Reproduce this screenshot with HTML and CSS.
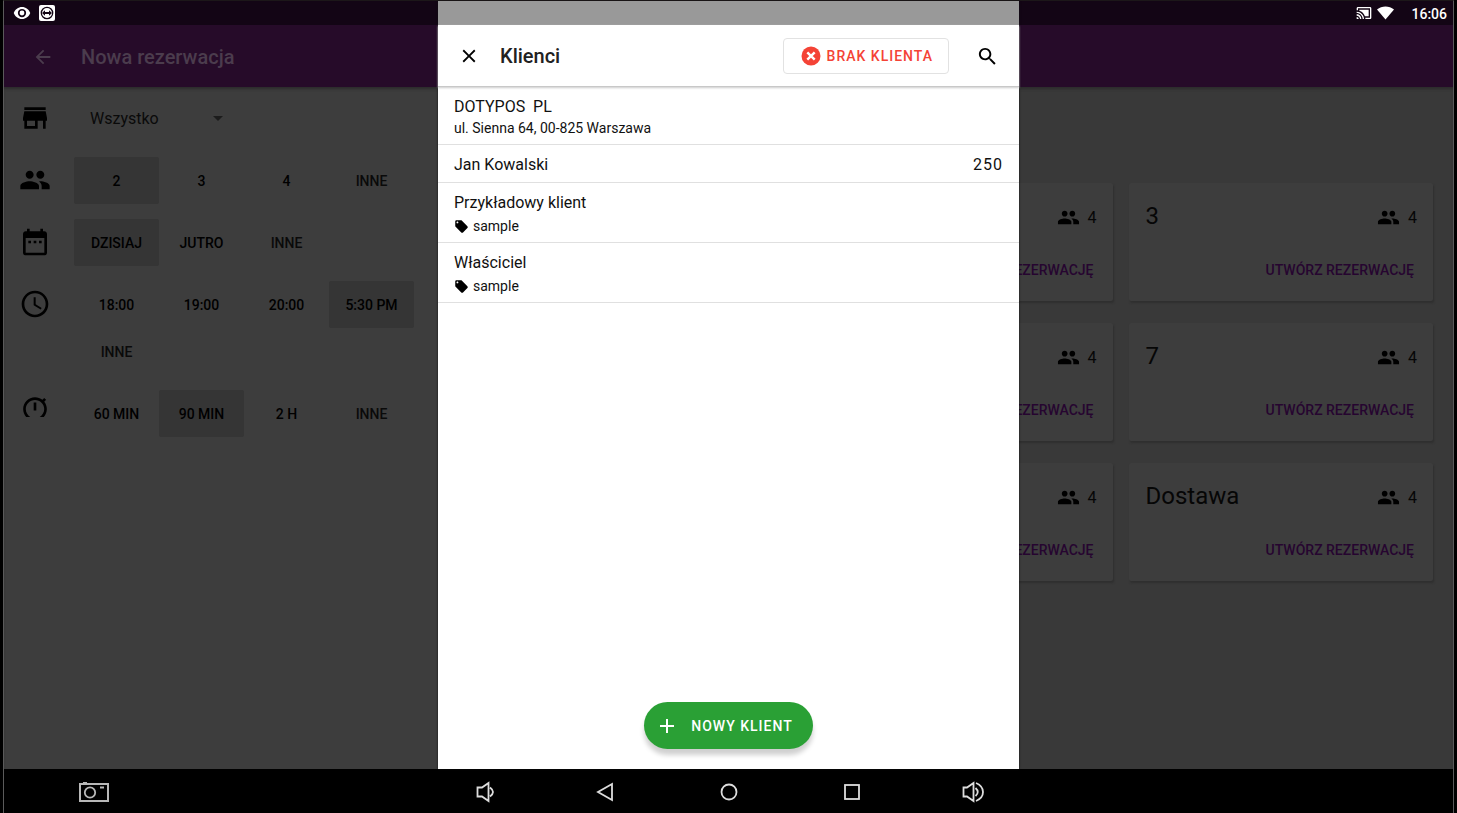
FILE: index.html
```
<!DOCTYPE html>
<html lang="pl">
<head>
  <meta charset="UTF-8">
  <meta name="viewport" content="width=device-width, initial-scale=1.0">
  <title>Nowa rezerwacja</title>
  <link rel="stylesheet" href="styles.css">
</head>
<body>
  <svg class="sprite" aria-hidden="true">
    <symbol id="people" viewBox="0 0 24 24">
      <path d="M16 11c1.66 0 2.99-1.34 2.99-3S17.66 5 16 5s-3 1.34-3 3 1.34 3 3 3zm-8 0c1.66 0 2.99-1.34 2.99-3S9.66 5 8 5 5 6.34 5 8s1.34 3 3 3zm0 2c-2.33 0-7 1.17-7 3.500V19h14v-2.500C15 14.170 10.330 13 8 13zm8 0c-.29 0-.62.020-.97.050C16.190 13.890 17 15.020 17 16.500V19h6v-2.500C23 14.170 18.330 13 16 13z"/>
    </symbol>
    <symbol id="tag" viewBox="0 0 24 24">
      <path d="M21.410 11.580l-9-9C12.050 2.220 11.550 2 11 2H4c-1.100 0-2 .9-2 2v7c0 .55.220 1.050.590 1.420l9 9c.36.36.86.58 1.410.58s1.050-.22 1.410-.590l7-7c.37-.36.590-.86.590-1.410s-.23-1.060-.590-1.420zM5.500 7C4.670 7 4 6.330 4 5.500S4.670 4 5.500 4 7 4.670 7 5.500 6.330 7 5.500 7z"/>
    </symbol>
  </svg>

  <div class="screen">
    <div class="status">
      <svg width="18" height="18" viewBox="0 0 24 24"><path d="M12 4C7 4 2.730 7.300 1 12c1.730 4.700 6 8 11 8s9.270-3.300 11-8c-1.730-4.700-6-8-11-8zm0 13.500a5.500 5.500 0 1 1 0-11 5.500 5.500 0 0 1 0 11zm0-8.700a3.200 3.200 0 1 0 0 6.400 3.200 3.200 0 0 0 0-6.400z"/></svg>
      <svg class="remote" width="16" height="16" viewBox="0 0 16 16"><rect width="16" height="16" rx="2"/><circle cx="8" cy="8" r="5.700" fill="none" stroke="#130515" stroke-width="1.300"/><path fill="#130515" d="M3 8l3-2.700v1.800h4V5.300L13 8l-3 2.700V8.900H6v1.800z"/></svg>
      <svg class="cast" width="16" height="16" viewBox="0 0 24 24"><path d="M1 18v3h3c0-1.660-1.340-3-3-3zm0-4v2c2.760 0 5 2.240 5 5h2c0-3.870-3.130-7-7-7zm18-7H5v1.630c3.960 1.280 7.090 4.410 8.370 8.370H19V7zM1 10v2c4.970 0 9 4.030 9 9h2c0-6.080-4.930-11-11-11zm20-7H3c-1.100 0-2 .9-2 2v3h2V5h18v14h-7v2h7c1.100 0 2-.9 2-2V5c0-1.100-.9-2-2-2z"/></svg>
      <svg width="17" height="14" viewBox="0 0 17 14"><path d="M8.500 13.500L0 3.500C4.800-.5 12.200-.5 17 3.500z"/></svg>
      <span class="clock">16:06</span>
    </div>

    <header class="topbar">
      <button class="back" aria-label="Wstecz"><svg width="22" height="22" viewBox="0 0 24 24"><path d="M20 11H7.830l5.590-5.590L12 4l-8 8 8 8 1.410-1.410L7.830 13H20v-2z"/></svg></button>
      <h1>Nowa rezerwacja</h1>
    </header>

    <main class="content">
      <section class="filters">
        <div class="row">
          <svg class="icon" viewBox="0 0 24 24"><path d="M20 4H4v2h16V4zm1 10v-2l-1-5H4l-1 5v2h1v6h10v-6h4v6h2v-6h1zm-9 4H6v-4h6v4z"/></svg>
          <div class="place">
            <select aria-label="Sala"><option>Wszystko</option></select>
            <svg width="10" height="5" viewBox="0 0 10 5"><path d="M0 0h10L5 5z"/></svg>
          </div>
        </div>
        <div class="row">
          <svg class="icon"><use href="#people"/></svg>
          <div class="choices">
            <button class="selected">2</button><button>3</button><button>4</button><button class="other">INNE</button>
          </div>
        </div>
        <div class="row">
          <svg class="icon" viewBox="0 0 24 24"><path d="M9 11H7v2h2v-2zm4 0h-2v2h2v-2zm4 0h-2v2h2v-2zm2-7h-1V2h-2v2H8V2H6v2H5c-1.110 0-1.990.9-1.990 2L3 20c0 1.100.89 2 2 2h14c1.100 0 2-.9 2-2V6c0-1.100-.9-2-2-2zm0 16H5V9h14v11z"/></svg>
          <div class="choices">
            <button class="selected">DZISIAJ</button><button>JUTRO</button><button class="other">INNE</button>
          </div>
        </div>
        <div class="row">
          <svg class="icon" viewBox="0 0 24 24"><path d="M11.990 2C6.470 2 2 6.480 2 12s4.470 10 9.990 10C17.520 22 22 17.520 22 12S17.520 2 11.990 2zM12 20c-4.420 0-8-3.580-8-8s3.580-8 8-8 8 3.580 8 8-3.580 8-8 8zm.5-13H11v6l5.250 3.150.75-1.230-4.500-2.670z"/></svg>
          <div class="choices">
            <button>18:00</button><button>19:00</button><button>20:00</button><button class="selected">5:30 PM</button><button class="other">INNE</button>
          </div>
        </div>
        <div class="row">
          <svg class="icon timer" viewBox="0 0 24 19"><path d="M11 14h2V8h-2v6zm8.030-6.610l1.420-1.420c-.43-.51-.9-.99-1.410-1.410l-1.420 1.420C16.070 4.740 14.120 4 12 4c-4.970 0-9 4.030-9 9s4.020 9 9 9 9-4.030 9-9c0-2.120-.74-4.070-1.970-5.610zM12 20c-3.870 0-7-3.130-7-7s3.130-7 7-7 7 3.130 7 7-3.130 7-7 7z"/></svg>
          <div class="choices">
            <button>60 MIN</button><button class="selected">90 MIN</button><button>2 H</button><button class="other">INNE</button>
          </div>
        </div>
      </section>

      <section class="tables">
        <article class="card middle">
          <div class="seats"><svg><use href="#people"/></svg>4</div>
          <button>UTWÓRZ REZERWACJĘ</button>
        </article>
        <article class="card">
          <h2>3</h2>
          <div class="seats"><svg><use href="#people"/></svg>4</div>
          <button>UTWÓRZ REZERWACJĘ</button>
        </article>
        <article class="card middle">
          <div class="seats"><svg><use href="#people"/></svg>4</div>
          <button>UTWÓRZ REZERWACJĘ</button>
        </article>
        <article class="card">
          <h2>7</h2>
          <div class="seats"><svg><use href="#people"/></svg>4</div>
          <button>UTWÓRZ REZERWACJĘ</button>
        </article>
        <article class="card middle">
          <div class="seats"><svg><use href="#people"/></svg>4</div>
          <button>UTWÓRZ REZERWACJĘ</button>
        </article>
        <article class="card">
          <h2>Dostawa</h2>
          <div class="seats"><svg><use href="#people"/></svg>4</div>
          <button>UTWÓRZ REZERWACJĘ</button>
        </article>
      </section>
    </main>

    <div class="dialog" role="dialog" aria-labelledby="dialog-title">
      <div class="dialog-head">
        <button class="close" aria-label="Zamknij"><svg width="22" height="22" viewBox="0 0 24 24"><path d="M19 6.410L17.590 5 12 10.590 6.410 5 5 6.410 10.590 12 5 17.590 6.410 19 12 13.410 17.590 19 19 17.590 13.410 12z"/></svg></button>
        <h2 id="dialog-title">Klienci</h2>
        <button class="no-client">
          <svg width="20" height="20" viewBox="0 0 20 20"><circle cx="10" cy="10" r="9.500" fill="#f44336"/><path d="M6.300 6.300l7.400 7.400M13.700 6.300l-7.400 7.400" stroke="#fff" stroke-width="2.400"/></svg>
          BRAK KLIENTA
        </button>
        <button class="search" aria-label="Szukaj"><svg width="23" height="23" viewBox="0 0 24 24"><path d="M15.500 14h-.79l-.28-.27C15.410 12.590 16 11.110 16 9.500 16 5.910 13.090 3 9.500 3S3 5.910 3 9.500 5.910 16 9.500 16c1.610 0 3.090-.590 4.230-1.570l.27.28v.79l5 4.990L20.490 19l-4.990-5zm-6 0C7.010 14 5 11.990 5 9.500S7.010 5 9.500 5 14 7.010 14 9.500 11.990 14 9.500 14z"/></svg></button>
      </div>
      <ul class="clients">
        <li>
          <div class="name">DOTYPOS  PL</div>
          <div class="detail">ul. Sienna 64, 00-825 Warszawa</div>
        </li>
        <li>
          <div class="name">Jan Kowalski <span class="points">250</span></div>
        </li>
        <li>
          <div class="name">Przykładowy klient</div>
          <div class="detail tagged"><svg><use href="#tag"/></svg>sample</div>
        </li>
        <li>
          <div class="name">Właściciel</div>
          <div class="detail tagged"><svg><use href="#tag"/></svg>sample</div>
        </li>
      </ul>
      <button class="new-client">
        <svg width="14" height="14" viewBox="0 0 14 14"><path d="M7 0v14M0 7h14" stroke="#fff" stroke-width="2"/></svg>
        NOWY KLIENT
      </button>
    </div>

    <nav class="navbar">
      <button class="camera" aria-label="Zrzut ekranu"><svg width="30" height="20" viewBox="0 0 30 20"><rect x="1" y="2" width="28" height="17" stroke-width="2"/><path d="M4 1h4M21 5.500h4" stroke-width="2"/><circle cx="11" cy="10.500" r="5.200"/></svg></button>
      <div class="keys">
        <button aria-label="Ciszej"><svg width="24" height="24" viewBox="0 0 24 24"><path d="M4.500 7.500H9l6.500-4.500v18L9 16.500H4.500zM17 7.500q6 4.500 0 9"/></svg></button>
        <button aria-label="Wstecz"><svg width="24" height="24" viewBox="0 0 24 24"><path d="M17 4v16L3 12z"/></svg></button>
        <button aria-label="Ekran główny"><svg width="24" height="24" viewBox="0 0 24 24"><circle cx="12" cy="12" r="7.500"/></svg></button>
        <button aria-label="Ostatnie"><svg width="24" height="24" viewBox="0 0 24 24"><rect x="6" y="5" width="14" height="14"/></svg></button>
        <button aria-label="Głośniej"><svg width="24" height="24" viewBox="0 0 24 24"><path d="M2.500 7.500H6l6.500-4.500v18L6 16.500H2.500zM14.500 8q4.500 4 0 8M15 3q7 3 7 9t-7 9"/></svg></button>
      </div>
    </nav>
  </div>
</body>
</html>
```

FILE: styles.css
```
* {
  box-sizing: border-box;
}
body {
  margin: 0;
  padding: 0 3px;
  background: #000;
  font-family: Roboto, sans-serif;
  font-size: 14px;
  color: #000;
}
h1, h2, ul {
  margin: 0;
  padding: 0;
}
button {
  background: none;
  border: none;
  padding: 0;
  font: inherit;
  font-weight: 500;
  color: inherit;
  cursor: pointer;
}
svg {
  display: block;
  flex: none;
}
.sprite {
  position: absolute;
  width: 0;
  height: 0;
}
.screen {
  position: relative;
  display: flex;
  flex-direction: column;
  min-height: 100vh;
  border: 1px solid #5a5a5a;
  border-top-color: #1c1719;
  border-bottom: none;
}

/* status bar */
.status {
  display: flex;
  align-items: center;
  height: 24px;
  padding: 0 6px 0 9px;
  background: #130515;
  color: #fff;
  fill: #fff;
}
.remote {
  margin-left: 8px;
}
.cast {
  margin-left: auto;
  margin-right: 5px;
}
.clock {
  margin-left: 17px;
  padding-top: 1px;
  font-weight: 500;
}

/* app bar */
.topbar {
  display: flex;
  align-items: center;
  height: 62px;
  padding-top: 2px;
  padding-left: 28px;
  background: #260b29;
  color: #4b3c4d;
  fill: #4b3c4d;
}
.topbar h1 {
  margin-left: 27px;
  font-size: 20px;
  font-weight: 500;
}

.content {
  flex: 1;
  display: flex;
  background: #393939;
  box-shadow: inset 0 3px 3px -1px #2c2c2c;
}

/* filters */
.filters {
  flex: 0 0 32%;
  display: flex;
  flex-direction: column;
  gap: 15px;
  padding-top: 8px;
  background: #3d3d3d;
  box-shadow: inset 0 3px 3px -1px #2c2c2c;
}
.row {
  display: flex;
  gap: 23px;
  padding-left: 15px;
}
.icon {
  width: 32px;
  height: 32px;
  margin-top: 7px;
}
.timer {
  height: 25px;
  margin-top: 2px;
}
.choices {
  display: grid;
  grid-template-columns: repeat(4, 85px);
}
.choices button {
  height: 47px;
  border-radius: 2px;
}
.choices .selected {
  background: #353535;
}
.choices .other {
  color: #0a0a0a;
}
.place {
  display: flex;
  align-items: center;
  height: 47px;
  padding-left: 16px;
  fill: #1c1c1c;
}
.place select {
  width: 123px;
  padding: 0;
  border: none;
  appearance: none;
  background: none;
  font: inherit;
  font-size: 16px;
  color: #0a0a0a;
}

/* tables */
.tables {
  flex: 1;
  display: grid;
  grid-template-columns: repeat(3, 1fr);
  align-content: start;
  gap: 22px 16px;
  padding: 96px 20px 20px;
}
.card {
  display: grid;
  grid-template-columns: 1fr auto;
  align-content: space-between;
  height: 118px;
  padding: 16px 16px 21px 17px;
  border-radius: 2px;
  background: #3d3d3d;
  box-shadow: 1px 2px 2px #2f2f2f;
}
.middle {
  grid-column: 2;
}
.card h2 {
  font-size: 24px;
  font-weight: 400;
  line-height: 34px;
  color: #060606;
}
.seats {
  grid-column: 2;
  display: flex;
  align-items: center;
  gap: 8px;
  height: 37px;
  font-size: 16px;
  color: #060606;
}
.seats svg {
  width: 23px;
  height: 23px;
}
.card button {
  grid-column: 1 / 3;
  justify-self: end;
  margin-right: 3px;
  line-height: 20px;
  color: #260530;
}

/* client dialog */
.dialog {
  position: absolute;
  top: 0;
  bottom: 44px;
  left: 0;
  right: 0;
  width: 581px;
  max-width: 100%;
  margin: 0 auto;
  display: flex;
  flex-direction: column;
  border-top: 24px solid #999;
  background: #fff;
  box-shadow: 0 0 2px #111;
}
.dialog-head {
  display: flex;
  align-items: center;
  height: 62px;
  padding: 1px 20px 0;
  border-bottom: 1px solid #c8c8c8;
  box-shadow: 0 1px 2px #ccc;
}
.dialog-head h2 {
  margin-left: 20px;
  margin-right: auto;
  font-size: 20px;
  font-weight: 500;
  color: #212121;
}
.no-client {
  display: flex;
  align-items: center;
  gap: 6px;
  height: 36px;
  padding: 0 15px 0 17px;
  border: 1px solid #e2e2e2;
  border-radius: 4px;
  letter-spacing: 1px;
  color: #f44336;
}
.search {
  margin-left: 27px;
}
.clients {
  flex: 1;
  list-style: none;
}
.clients li {
  padding: 9px 16px 6px;
  border-bottom: 1px solid #e0e0e0;
}
.name {
  display: flex;
  justify-content: space-between;
  font-size: 16px;
  line-height: 22px;
  white-space: pre;
  color: #111;
}
.points {
  letter-spacing: 1px;
}
.detail {
  line-height: 20px;
  color: #111;
}
.tagged {
  display: flex;
  align-items: center;
  gap: 4px;
  padding-top: 2px;
}
.tagged svg {
  width: 15px;
  height: 15px;
}
.new-client {
  align-self: center;
  display: flex;
  align-items: center;
  gap: 17px;
  height: 47px;
  margin-bottom: 20px;
  padding: 0 20px 0 16px;
  border-radius: 24px;
  background: #2aa035;
  box-shadow: 0 6px 5px #d0d0d0;
  letter-spacing: 1px;
  color: #fff;
}

/* system buttons */
.navbar {
  display: grid;
  grid-template-columns: 1fr auto 1fr;
  align-items: center;
  height: 44px;
  padding-top: 2px;
  background: #000;
}
.navbar svg {
  margin: 0 auto;
  fill: none;
  stroke: #ddd;
  stroke-width: 1.800;
}
.navbar .camera svg {
  stroke: #b8b8b8;
}
.camera {
  justify-self: start;
  margin-left: 75px;
}
.keys {
  display: grid;
  grid-template-columns: repeat(5, 122px);
}
```
